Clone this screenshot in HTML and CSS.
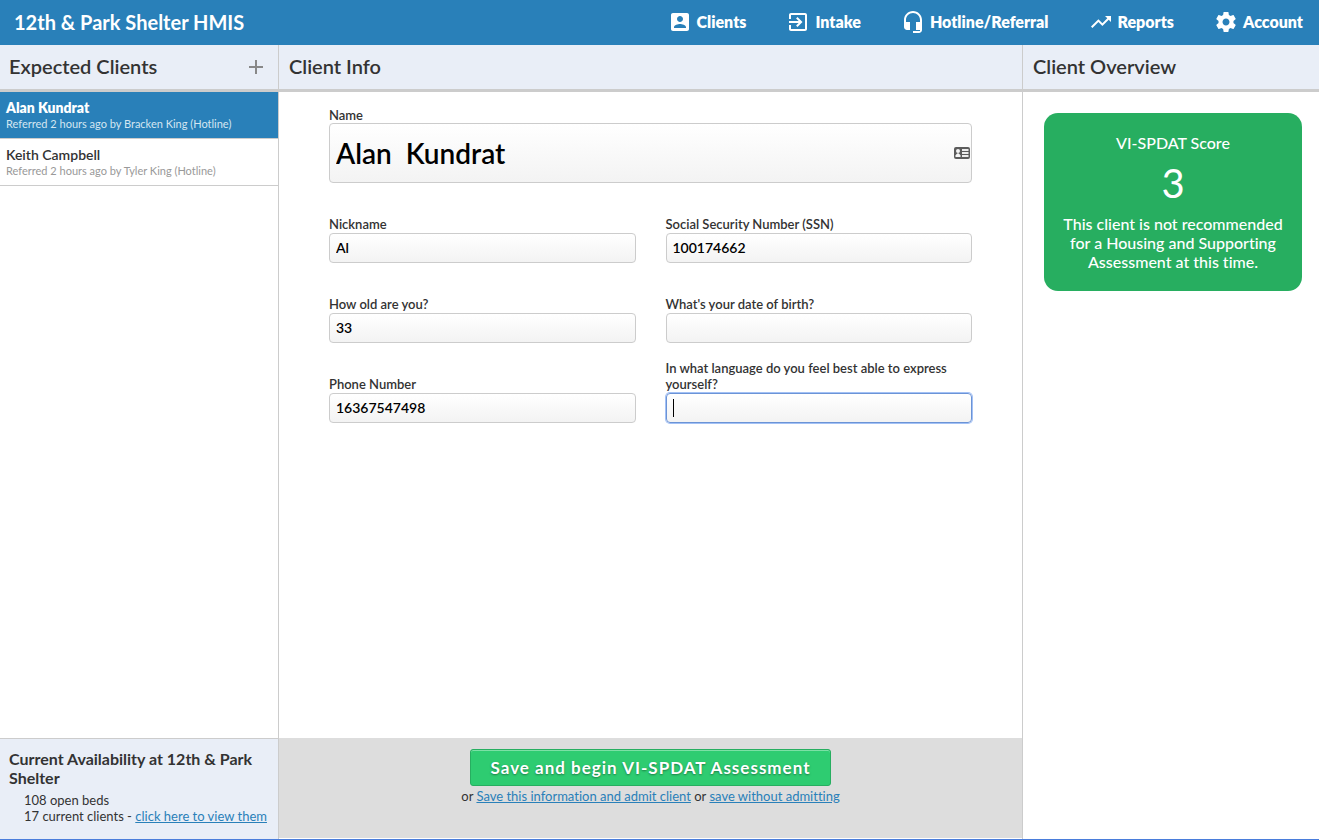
FILE: index.html
```html
<!DOCTYPE html>
<html lang="en">
<head>
<meta charset="utf-8">
<title>12th &amp; Park Shelter HMIS</title>
<link rel="stylesheet" href="styles.css">
</head>
<body>
<div class="app">
  <header class="topbar">
    <h1 class="brand">12th &amp; Park Shelter HMIS</h1>
    <nav class="nav">
      <a class="nav-link" href="#"><svg class="icon" viewBox="0 0 24 24"><path d="M3 5v14c0 1.100.890 2 2 2h14c1.100 0 2-.900 2-2V5c0-1.100-.900-2-2-2H5c-1.110 0-2 .900-2 2zm12 4c0 1.660-1.340 3-3 3s-3-1.340-3-3 1.340-3 3-3 3 1.340 3 3zm-9 8c0-2 4-3.100 6-3.100s6 1.100 6 3.100v1H6v-1z"/></svg>Clients</a>
      <a class="nav-link" href="#"><svg class="icon" viewBox="0 0 24 24"><path d="M10.090 15.590L11.500 17l5-5-5-5-1.410 1.410L12.670 11H3v2h9.670l-2.580 2.590zM19 3H5c-1.110 0-2 .900-2 2v4h2V5h14v14H5v-4H3v4c0 1.100.890 2 2 2h14c1.100 0 2-.900 2-2V5c0-1.100-.900-2-2-2z"/></svg>Intake</a>
      <a class="nav-link" href="#"><svg class="icon" viewBox="0 0 24 24"><path d="M12 1c-4.970 0-9 4.030-9 9v7c0 1.660 1.340 3 3 3h3v-8H5v-2c0-3.870 3.130-7 7-7s7 3.130 7 7v2h-4v8h4v1h-7v2h6c1.660 0 3-1.340 3-3V10c0-4.970-4.030-9-9-9z"/></svg>Hotline/Referral</a>
      <a class="nav-link" href="#"><svg class="icon" viewBox="0 0 24 24"><path d="M16 6l2.290 2.290-4.880 4.880-4-4L2 16.590 3.410 18l6-6 4 4 6.300-6.290L22 12V6z"/></svg>Reports</a>
      <a class="nav-link" href="#"><svg class="icon" viewBox="0 0 24 24"><path d="M19.430 12.980c.040-.320.070-.640.070-.980s-.030-.660-.070-.980l2.110-1.650c.190-.150.240-.420.120-.640l-2-3.460c-.120-.220-.390-.300-.610-.220l-2.490 1c-.520-.400-1.080-.730-1.690-.980l-.380-2.650C14.460 2.180 14.250 2 14 2h-4c-.250 0-.460.180-.490.420l-.380 2.650c-.610.250-1.170.590-1.690.980l-2.490-1c-.230-.090-.490 0-.610.220l-2 3.460c-.130.220-.070.490.120.640l2.110 1.650c-.040.320-.070.650-.070.980s.030.660.070.980l-2.110 1.650c-.190.150-.240.420-.120.640l2 3.460c.120.220.390.300.610.220l2.490-1c.520.400 1.080.730 1.690.980l.380 2.650c.030.240.240.420.490.420h4c.250 0 .460-.180.490-.420l.380-2.650c.610-.250 1.170-.590 1.690-.980l2.490 1c.230.090.490 0 .610-.220l2-3.460c.120-.220.070-.490-.120-.640l-2.110-1.650zM12 15.500c-1.930 0-3.500-1.570-3.500-3.500s1.570-3.500 3.500-3.500 3.500 1.570 3.500 3.500-1.570 3.500-3.500 3.500z"/></svg>Account</a>
    </nav>
  </header>

  <div class="columns">
    <aside class="panel clients">
      <div class="panel-head">
        <h2 class="panel-title">Expected Clients</h2>
        <button class="add" type="button" aria-label="Add client"><svg class="icon" viewBox="0 0 24 24"><path d="M19 13h-6v6h-2v-6H5v-2h6V5h2v6h6v2z"/></svg></button>
      </div>
      <ul class="client-list">
        <li><a class="client client-active" href="#"><span class="client-name">Alan Kundrat</span><span class="client-note">Referred 2 hours ago by Bracken King (Hotline)</span></a></li>
        <li><a class="client" href="#"><span class="client-name">Keith Campbell</span><span class="client-note">Referred 2 hours ago by Tyler King (Hotline)</span></a></li>
      </ul>
      <section class="availability">
        <h3 class="availability-title">Current Availability at 12th &amp; Park Shelter</h3>
        <p class="availability-line">108 open beds</p>
        <p class="availability-line">17 current clients - <a class="link" href="#">click here to view them</a></p>
      </section>
    </aside>

    <main class="panel info">
      <div class="panel-head"><h2 class="panel-title">Client Info</h2></div>
      <form class="info-form">
        <div class="fields">
          <div class="field field-wide">
            <label class="label" for="name">Name</label>
            <div class="control">
              <input class="input input-large" id="name" type="text" value="Alan  Kundrat">
              <svg class="card-icon" viewBox="0 0 16 12"><rect width="16" height="12" rx="2" fill="#5c5c5c"/><circle cx="4" cy="4" r="2" fill="#f5f5f5"/><path d="M1.500 10V8.500Q2 7 4 6q2 1 2.500 2.500V10z" fill="#f5f5f5"/><path d="M8 2h6.500v2H8zM8 5h6.500v2H8zM8 8h6.500v2H8z" fill="#ececec"/></svg>
            </div>
          </div>
          <div class="field"><label class="label" for="nickname">Nickname</label><input class="input" id="nickname" type="text" value="Al"></div>
          <div class="field"><label class="label" for="ssn">Social Security Number (SSN)</label><input class="input" id="ssn" type="text" value="100174662"></div>
          <div class="field"><label class="label" for="age">How old are you?</label><input class="input" id="age" type="text" value="33"></div>
          <div class="field"><label class="label" for="birth">What's your date of birth?</label><input class="input" id="birth" type="text"></div>
          <div class="field"><label class="label" for="phone">Phone Number</label><input class="input" id="phone" type="text" value="16367547498"></div>
          <div class="field"><label class="label" for="language">In what language do you feel best able to express yourself?</label><div class="control control-focused"><input class="input" id="language" type="text"></div></div>
        </div>
        <div class="actions">
          <button class="save" type="submit">Save and begin VI-SPDAT Assessment</button>
          <p class="alternatives">or <a class="link" href="#">Save this information and admit client</a> or <a class="link" href="#">save without admitting</a></p>
        </div>
      </form>
    </main>

    <aside class="panel overview">
      <div class="panel-head"><h2 class="panel-title">Client Overview</h2></div>
      <section class="score-card">
        <h3 class="score-title">VI-SPDAT Score</h3>
        <p class="score">3</p>
        <p class="score-note">This client is not recommended for a Housing and Supporting Assessment at this time.</p>
      </section>
    </aside>
  </div>
</div>
</body>
</html>
```
FILE: styles.css
```css
* { box-sizing: border-box; }

body, h1, h2, h3, p, ul { margin: 0; padding: 0; }

body {
  font-family: Lato, "Liberation Sans", sans-serif;
  font-size: 13px;
  line-height: 16px;
  font-variant-ligatures: none;
  color: #333;
  background: #fff;
}

.app {
  display: flex;
  flex-direction: column;
  height: 100vh;
  border-bottom: 1px solid #4a7ddb;
}

.topbar {
  display: flex;
  align-items: center;
  justify-content: space-between;
  height: 45px;
  flex: none;
  padding: 0 16px 2px 14px;
  color: #fff;
  background: #2980b9;
}

.brand { font-size: 20px; line-height: 24px; font-weight: 700; }

.nav { display: flex; gap: 40px; }

.nav-link {
  display: flex;
  align-items: center;
  gap: 5px;
  color: #fff;
  font-size: 16px;
  line-height: 24px;
  font-weight: 800;
  text-decoration: none;
}

.icon { display: block; width: 24px; height: 24px; fill: currentColor; }

.columns {
  flex: 1;
  min-height: 0;
  display: grid;
  grid-template-columns: 279px 1fr 296px;
}

.panel { display: flex; flex-direction: column; min-width: 0; }
.clients, .info { border-right: 1px solid #ccc; }

.panel-head {
  display: flex;
  align-items: center;
  justify-content: space-between;
  height: 47px;
  flex: none;
  padding: 0 10px;
  background: #e9eef7;
  border-bottom: 3px solid #ccc;
}
.clients .panel-head { padding-left: 9px; }

.panel-title { padding-bottom: 2px; font-size: 20px; line-height: 24px; font-weight: 600; }

.add { padding: 0; border: 0; background: none; color: #888; }

.client-list { flex: 1; list-style: none; }

.client {
  display: block;
  padding: 7px 6px;
  border-bottom: 1px solid #ccc;
  color: #333;
  text-decoration: none;
}
.client-name { display: block; margin-bottom: 1px; font-size: 14px; line-height: 17px; font-weight: 600; }
.client-note { display: block; font-size: 11px; line-height: 14px; color: #999; }
.client-active { color: #fff; background: #2980b9; }
.client-active .client-name { font-weight: 800; }
.client-active .client-note { color: #d4e6f1; }

.availability {
  padding: 10px 9px 15px;
  border-top: 1px solid #ccc;
  background: #e9eef7;
}
.availability-title { margin-bottom: 5px; font-size: 16px; line-height: 19px; font-weight: 700; }
.availability-line { padding-left: 15px; }

.link { color: #2980b9; text-decoration: underline; }

.info-form { flex: 1; display: flex; flex-direction: column; }

.fields {
  flex: 1;
  display: grid;
  grid-template-columns: 1fr 1fr;
  grid-template-rows: 76px;
  grid-auto-rows: 62px;
  gap: 18px 30px;
  padding: 15px 50px;
}
.field { display: flex; flex-direction: column; justify-content: flex-end; gap: 1px; }
.field-wide { grid-column: 1 / -1; gap: 0; }

.label { font-size: 13px; line-height: 16px; font-weight: 600; }

.control { position: relative; }

.input {
  display: block;
  width: 100%;
  height: 30px;
  padding: 0 6px 2px;
  border: 1px solid #ccc;
  border-radius: 4px;
  background: linear-gradient(#fff, #f3f3f3);
  color: #000;
  font-family: inherit;
  font-size: 14px;
  font-weight: 600;
}
.input-large { height: 60px; padding-bottom: 0; font-size: 28px; }

.control-focused .input { border-color: #6b93d6; box-shadow: 0 0 0 1px #a3c1f5; outline: 0; }
.control-focused::after {
  content: "";
  position: absolute;
  left: 7px;
  top: 6px;
  width: 1px;
  height: 18px;
  background: #000;
}

.card-icon { position: absolute; right: 2px; top: 24px; width: 16px; height: 12px; }

.actions {
  display: flex;
  flex-direction: column;
  align-items: center;
  gap: 2px;
  min-height: 100px;
  padding-top: 11px;
  margin-bottom: 1px;
  background: #ddd;
}

.save {
  height: 37px;
  padding: 0 20px;
  border: 1px solid #27ae60;
  border-radius: 3px;
  background: #2ecc71;
  box-shadow: inset 0 1px 0 #7be0a5;
  color: #fff;
  font-family: inherit;
  font-size: 17px;
  line-height: 24px;
  font-weight: 700;
  letter-spacing: 1px;
  text-shadow: 0 1px 2px #1c7d45;
}

.score-card {
  margin: 21px 17px 0 21px;
  padding: 20px 16px;
  border-radius: 14px;
  background: #27ae60;
  color: #fff;
  text-align: center;
}
.score-title, .score-note { font-size: 16px; line-height: 19px; font-weight: 500; }
.score { margin: 9px 0 8px; font-size: 40px; line-height: 45px; }
```
